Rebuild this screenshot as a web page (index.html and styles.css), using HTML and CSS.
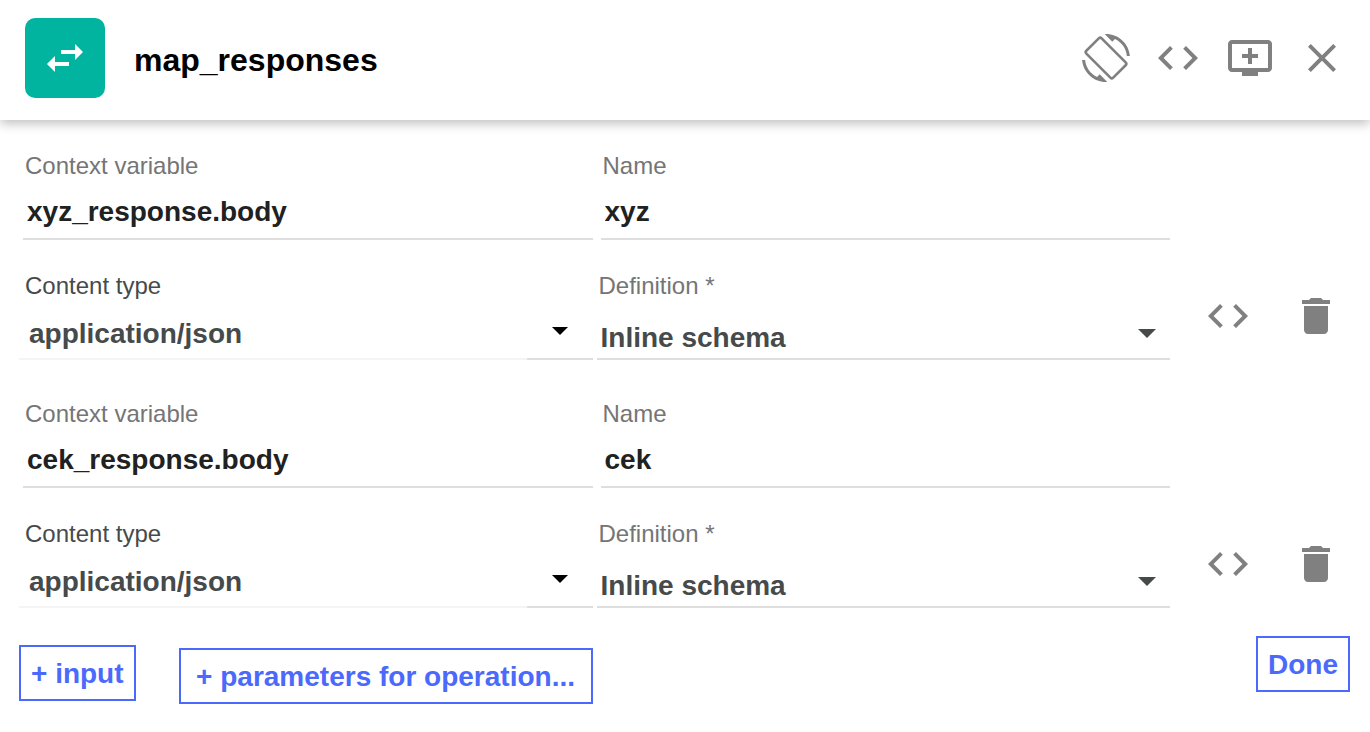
FILE: index.html
```html
<!DOCTYPE html>
<html lang="en">
<head>
<meta charset="utf-8">
<title>map_responses</title>
<link rel="stylesheet" href="styles.css">
</head>
<body>
<svg class="sprite" aria-hidden="true">
  <symbol id="swap" viewBox="0 0 24 24"><path d="M6.99 11L3 15l3.99 4v-3H14v-2H6.99v-3zM21 9l-3.99-4v3H10v2h7.01v3L21 9z"/></symbol>
  <symbol id="rotate" viewBox="0 0 24 24"><path d="M16.48 2.52c3.27 1.55 5.61 4.72 5.97 8.48h1.5C23.44 4.84 18.29 0 12 0l-.66.03 3.81 3.81 1.33-1.32zM7.52 21.48C4.25 19.94 1.91 16.76 1.55 13H.05C.56 19.16 5.71 24 12 24l.66-.03-3.81-3.81-1.33 1.32z"/><rect x="2.5" y="6.6" width="19" height="10.8" rx="1" transform="rotate(45 12 12)" fill="none" stroke="currentColor" stroke-width="1.3"/></symbol>
  <symbol id="code" viewBox="0 0 24 24"><path d="M9.4 16.6L4.8 12l4.6-4.6L8 6l-6 6 6 6 1.4-1.4zm5.2 0l4.6-4.6-4.6-4.6L16 6l6 6-6 6-1.4-1.4z"/></symbol>
  <symbol id="queue" viewBox="0 0 24 24"><path d="M21 3H3c-1.11 0-2 .89-2 2v12c0 1.1.89 2 2 2h5v2h8v-2h5c1.1 0 1.99-.9 1.99-2L23 5c0-1.11-.9-2-2-2zm0 14H3V5h18v12zm-5-7v2h-3v3h-2v-3H8v-2h3V7h2v3h3z"/></symbol>
  <symbol id="close" viewBox="0 0 24 24"><path d="M19 6.41L17.59 5 12 10.59 6.41 5 5 6.41 10.59 12 5 17.59 6.41 19 12 13.41 17.59 19 19 17.59 13.41 12z"/></symbol>
  <symbol id="trash" viewBox="0 0 24 24"><path d="M6 19c0 1.1.9 2 2 2h8c1.1 0 2-.9 2-2V7H6v12zM19 4h-3.5l-1-1h-5l-1 1H5v2h14V4z"/></symbol>
  <symbol id="caret" viewBox="0 0 16 8"><path d="M0 0h16L8 8z"/></symbol>
</svg>

<header class="header">
  <span class="badge"><svg class="icon"><use href="#swap"/></svg></span>
  <h1 class="title">map_responses</h1>
  <div class="tools">
    <button class="icon-button" type="button" aria-label="Rotate layout"><svg class="icon"><use href="#rotate"/></svg></button>
    <button class="icon-button" type="button" aria-label="Source"><svg class="icon"><use href="#code"/></svg></button>
    <button class="icon-button" type="button" aria-label="Expand"><svg class="icon"><use href="#queue"/></svg></button>
    <button class="icon-button" type="button" aria-label="Close"><svg class="icon"><use href="#close"/></svg></button>
  </div>
</header>

<main class="main">
  <section class="group">
    <div class="fields">
      <div class="row row-text">
        <div class="field">
          <label class="label" for="variable-1">Context variable</label>
          <input class="control" id="variable-1" type="text" value="xyz_response.body">
        </div>
        <div class="field">
          <label class="label" for="name-1">Name</label>
          <input class="control" id="name-1" type="text" value="xyz">
        </div>
      </div>
      <div class="row row-choice">
        <div class="field">
          <label class="label label-type" for="type-1">Content type</label>
          <div class="combo">
            <input class="control combo-input" id="type-1" type="text" value="application/json">
            <button class="combo-toggle" type="button" aria-label="Show content types"><svg class="caret"><use href="#caret"/></svg></button>
          </div>
        </div>
        <div class="field">
          <label class="label" for="definition-1">Definition *</label>
          <div class="picker">
            <select class="control picker-select" id="definition-1"><option>Inline schema</option></select>
            <svg class="caret picker-caret" aria-hidden="true"><use href="#caret"/></svg>
          </div>
        </div>
      </div>
    </div>
    <div class="actions">
      <button class="icon-button" type="button" aria-label="Edit schema"><svg class="icon"><use href="#code"/></svg></button>
      <button class="icon-button" type="button" aria-label="Delete input"><svg class="icon"><use href="#trash"/></svg></button>
    </div>
  </section>

  <section class="group">
    <div class="fields">
      <div class="row row-text">
        <div class="field">
          <label class="label" for="variable-2">Context variable</label>
          <input class="control" id="variable-2" type="text" value="cek_response.body">
        </div>
        <div class="field">
          <label class="label" for="name-2">Name</label>
          <input class="control" id="name-2" type="text" value="cek">
        </div>
      </div>
      <div class="row row-choice">
        <div class="field">
          <label class="label label-type" for="type-2">Content type</label>
          <div class="combo">
            <input class="control combo-input" id="type-2" type="text" value="application/json">
            <button class="combo-toggle" type="button" aria-label="Show content types"><svg class="caret"><use href="#caret"/></svg></button>
          </div>
        </div>
        <div class="field">
          <label class="label" for="definition-2">Definition *</label>
          <div class="picker">
            <select class="control picker-select" id="definition-2"><option>Inline schema</option></select>
            <svg class="caret picker-caret" aria-hidden="true"><use href="#caret"/></svg>
          </div>
        </div>
      </div>
    </div>
    <div class="actions">
      <button class="icon-button" type="button" aria-label="Edit schema"><svg class="icon"><use href="#code"/></svg></button>
      <button class="icon-button" type="button" aria-label="Delete input"><svg class="icon"><use href="#trash"/></svg></button>
    </div>
  </section>
</main>

<footer class="footer">
  <button class="button add-input" type="button">+ input</button>
  <button class="button add-parameters" type="button">+ parameters for operation...</button>
  <button class="button done" type="button">Done</button>
</footer>
</body>
</html>
```
FILE: styles.css
```css
* {
  box-sizing: border-box;
}

body {
  margin: 0;
  background: #fff;
  color: #000;
  font-family: "Liberation Sans", Arial, sans-serif;
}

button,
input,
select {
  margin: 0;
  border: 0;
  border-radius: 0;
  padding: 0;
  background: transparent;
  font-family: inherit;
}

.sprite {
  display: none;
}

.icon {
  display: block;
  width: 48px;
  height: 48px;
  fill: currentColor;
}

.icon-button {
  color: #808080;
}

.header {
  display: flex;
  align-items: center;
  padding: 18px 24px 22px 25px;
  box-shadow: 0 4px 10px rgba(0, 0, 0, 0.24);
}

.badge {
  display: grid;
  place-items: center;
  width: 80px;
  height: 80px;
  border-radius: 10px;
  background: #00b4a0;
  color: #fff;
}

.title {
  flex: 1;
  margin: 0;
  padding: 4px 0 0 29px;
  font-size: 32px;
  line-height: 40px;
}

.tools {
  display: flex;
  gap: 24px;
}

.main {
  display: grid;
  gap: 40px;
  padding-top: 32px;
}

.group {
  display: flex;
  align-items: flex-end;
}

.fields {
  flex: 1;
  display: grid;
  gap: 32px;
}

.row {
  display: grid;
  grid-template-columns: 1fr 1fr;
}

.row-text {
  gap: 8px;
  padding-left: 23px;
}

.row-choice {
  gap: 4px;
  padding-left: 19px;
}

.field {
  display: grid;
  gap: 4px;
}

.label {
  padding-left: 2px;
  color: #757575;
  font-size: 24px;
  line-height: 28px;
}

.label-type {
  padding-left: 6px;
  color: #464a4b;
}

.control {
  width: 100%;
  height: 56px;
  border-bottom: 2px solid #dedede;
  padding: 2px 4px 0;
  color: #212121;
  font-size: 28px;
  font-weight: bold;
}

.combo {
  display: flex;
}

.combo-input {
  flex: 1;
  min-width: 0;
  border-bottom-color: #f4f4f4;
  padding: 6px 10px 0;
  color: #464a4b;
}

.combo-toggle {
  display: grid;
  place-items: center;
  width: 66px;
  border-bottom: 2px solid #dedede;
  color: #000;
}

.caret {
  width: 16px;
  height: 8px;
  fill: currentColor;
}

.picker {
  display: grid;
  align-items: center;
  color: #464a4b;
}

.picker-select,
.picker-caret {
  grid-area: 1 / 1;
}

.picker-select {
  appearance: none;
  padding-top: 12px;
  color: inherit;
}

.picker-caret {
  justify-self: end;
  width: 18px;
  height: 9px;
  margin: 2px 14px 0 0;
  pointer-events: none;
}

.actions {
  display: flex;
  justify-content: flex-end;
  gap: 40px;
  width: 200px;
  padding: 0 30px 20px 0;
}

.footer {
  display: flex;
  align-items: flex-start;
  padding: 28px 20px 28px 19px;
}

.button {
  height: 56px;
  border: 2px solid #4b69fb;
  padding: 2px 10px 0;
  color: #4b69fb;
  font-size: 28px;
  font-weight: bold;
}

.add-input {
  margin-top: 9px;
}

.add-parameters {
  min-width: 414px;
  margin: 12px 0 0 43px;
}

.done {
  margin-left: auto;
}
```
